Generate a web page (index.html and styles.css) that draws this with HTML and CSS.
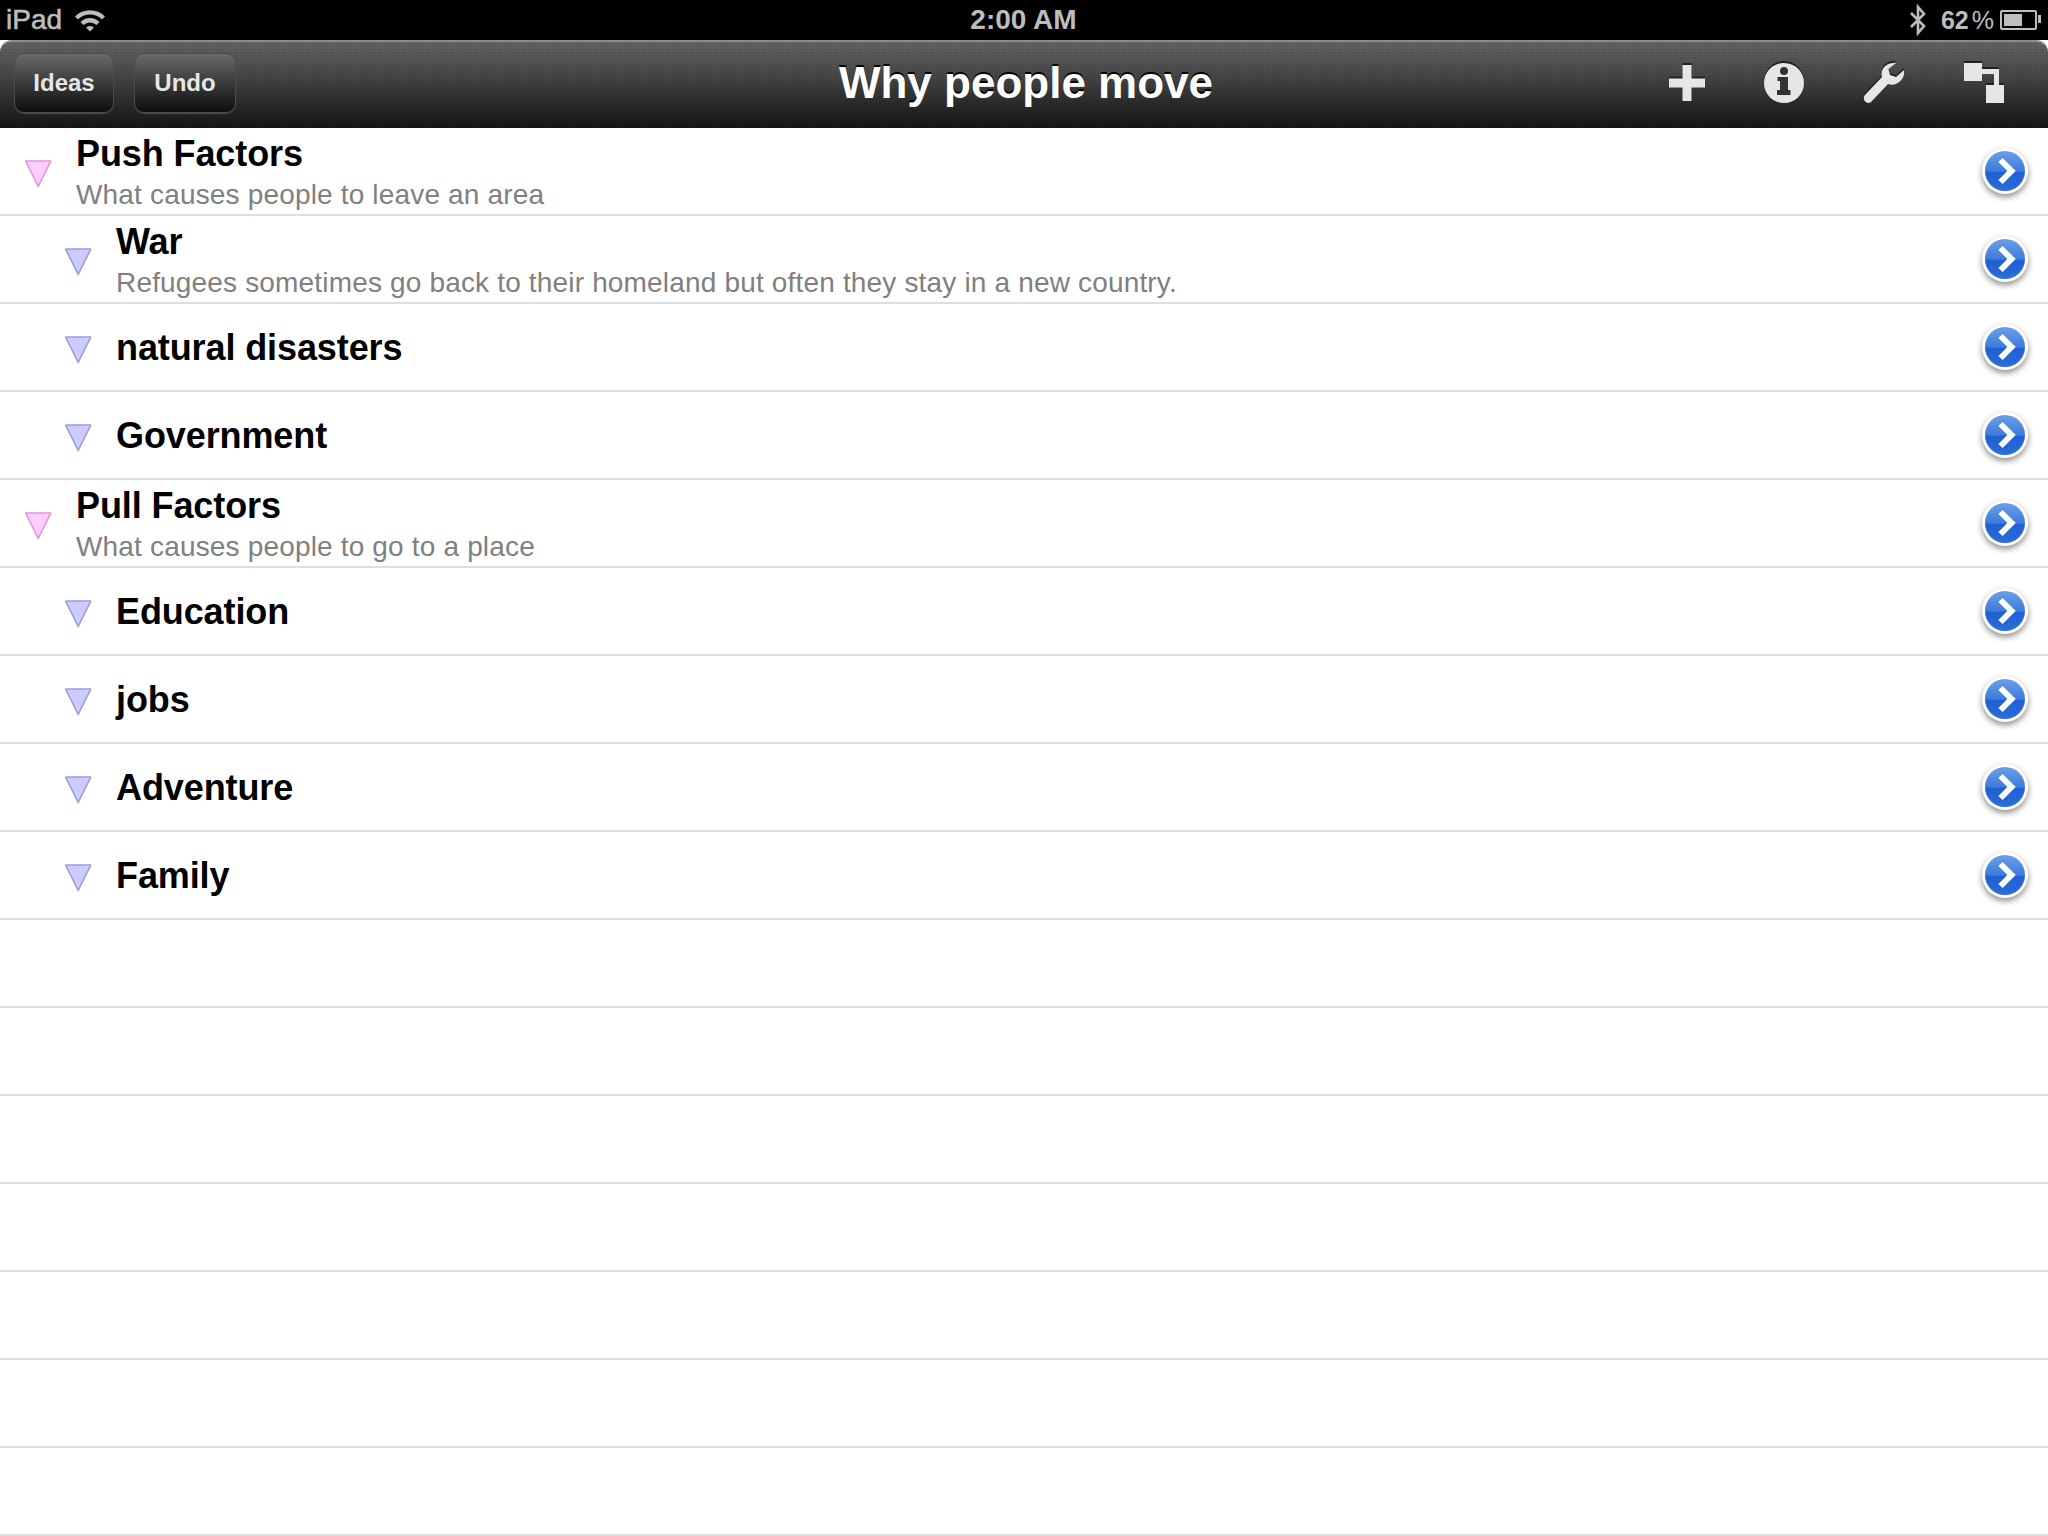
FILE: index.html
```html
<!DOCTYPE html>
<html lang="en">
<head>
    <meta charset="UTF-8">
    <title>Why people move</title>
    <link rel="stylesheet" href="styles.css">
</head>
<body>

    <svg class="svg-defs" width="0" height="0">
        <defs>
            <linearGradient id="disc-fill" x1="0" y1="0" x2="0" y2="1">
                <stop offset="0" stop-color="#6a9fe8"/>
                <stop offset="0.5" stop-color="#3f7cdd"/>
                <stop offset="0.54" stop-color="#1f5fd0"/>
                <stop offset="1" stop-color="#2c6edc"/>
            </linearGradient>
            <symbol id="disclosure" viewBox="0 0 50 50">
                <circle cx="25" cy="25" r="23" fill="#fff"/>
                <circle cx="25" cy="25" r="20" fill="url(#disc-fill)"/>
                <path d="M20.500 14 L31.500 25 L20.500 36" fill="none" stroke="#fff" stroke-width="6"/>
            </symbol>
            <symbol id="triangle" viewBox="0 0 28 28">
                <path d="M1.600 1 H26.800 L14.200 26.500 Z" stroke-width="1.600" stroke-linejoin="round"/>
            </symbol>
        </defs>
    </svg>

    <!-- status bar -->
    <div class="status-bar">
        <div class="status-left">
            <span class="carrier">iPad</span>
            <svg class="wifi" width="32" height="24" viewBox="0 0 32 24">
                <path d="M1 8.500 A21 21 0 0 1 31 8.500 L28 11.500 A17 17 0 0 0 4 11.500 Z" fill="#bdbdbd"/>
                <path d="M6.500 14 A13.500 13.500 0 0 1 25.500 14 L22.500 17 A9.500 9.500 0 0 0 9.500 17 Z" fill="#bdbdbd"/>
                <path d="M12 19.500 A6 6 0 0 1 20 19.500 L16 23.500 Z" fill="#bdbdbd"/>
            </svg>
        </div>
        <div class="status-time">2:00 AM</div>
        <div class="status-right">
            <svg class="bluetooth" width="18" height="32" viewBox="0 0 18 32">
                <path d="M2 9 L15 22 L9 29 V3 L15 10 L2 23" fill="none" stroke="#bdbdbd" stroke-width="2.600"/>
            </svg>
            <span class="battery-text">62<span class="pct">%</span></span>
            <div class="battery"><div class="battery-level"></div></div>
        </div>
    </div>

    <!-- toolbar -->
    <div class="toolbar">
        <div class="toolbar-left">
            <button class="bar-btn">Ideas</button>
            <button class="bar-btn">Undo</button>
        </div>
        <h1 class="toolbar-title">Why people move</h1>
        <div class="toolbar-right">
            <svg class="tool-icon" width="36" height="36" viewBox="0 0 36 36">
                <path d="M13.500 0 H22.500 V13.500 H36 V22.500 H22.500 V36 H13.500 V22.500 H0 V13.500 H13.500 Z"/>
            </svg>
            <svg class="tool-icon" width="40" height="40" viewBox="0 0 40 40">
                <circle cx="20" cy="20" r="20"/>
                <circle cx="20" cy="8" r="4" class="icon-cut"/>
                <path d="M13.500 14 H24 V27 H26.500 V32 H13 V27 H16 V18 H13.500 Z" class="icon-cut"/>
            </svg>
            <svg class="tool-icon" width="42" height="42" viewBox="0 0 42 42">
                <path d="M1.500 33.500 L19 15 C17 7 23 0 33 1 L25.500 7 L27 13 L33 15 L41 8 C42.500 18 33 25 25 22 L8 40 C4 43 -1 38 1.500 33.500 Z"/>
            </svg>
            <svg class="tool-icon" width="40" height="40" viewBox="0 0 40 40">
                <path d="M0 0 H18 V6 H35 V22 H40 V40 H22 V22 H30 V11 H18 V18 H0 Z"/>
            </svg>
        </div>
    </div>

    <!-- outline rows -->
    <div class="outline">
        <div class="row level-1">
            <svg class="tri"><use href="#triangle"/></svg>
            <div class="row-text"><div class="row-title">Push Factors</div><div class="row-note">What causes people to leave an area</div></div>
            <svg class="disc"><use href="#disclosure"/></svg>
        </div>
        <div class="row level-2">
            <svg class="tri"><use href="#triangle"/></svg>
            <div class="row-text"><div class="row-title">War</div><div class="row-note">Refugees sometimes go back to their homeland but often they stay in a new country.</div></div>
            <svg class="disc"><use href="#disclosure"/></svg>
        </div>
        <div class="row level-2">
            <svg class="tri"><use href="#triangle"/></svg>
            <div class="row-text"><div class="row-title">natural disasters</div></div>
            <svg class="disc"><use href="#disclosure"/></svg>
        </div>
        <div class="row level-2">
            <svg class="tri"><use href="#triangle"/></svg>
            <div class="row-text"><div class="row-title">Government</div></div>
            <svg class="disc"><use href="#disclosure"/></svg>
        </div>
        <div class="row level-1">
            <svg class="tri"><use href="#triangle"/></svg>
            <div class="row-text"><div class="row-title">Pull Factors</div><div class="row-note">What causes people to go to a place</div></div>
            <svg class="disc"><use href="#disclosure"/></svg>
        </div>
        <div class="row level-2">
            <svg class="tri"><use href="#triangle"/></svg>
            <div class="row-text"><div class="row-title">Education</div></div>
            <svg class="disc"><use href="#disclosure"/></svg>
        </div>
        <div class="row level-2">
            <svg class="tri"><use href="#triangle"/></svg>
            <div class="row-text"><div class="row-title">jobs</div></div>
            <svg class="disc"><use href="#disclosure"/></svg>
        </div>
        <div class="row level-2">
            <svg class="tri"><use href="#triangle"/></svg>
            <div class="row-text"><div class="row-title">Adventure</div></div>
            <svg class="disc"><use href="#disclosure"/></svg>
        </div>
        <div class="row level-2">
            <svg class="tri"><use href="#triangle"/></svg>
            <div class="row-text"><div class="row-title">Family</div></div>
            <svg class="disc"><use href="#disclosure"/></svg>
        </div>
        <div class="row"></div>
        <div class="row"></div>
        <div class="row"></div>
        <div class="row"></div>
        <div class="row"></div>
        <div class="row"></div>
        <div class="row"></div>
    </div>

</body>
</html>
```

FILE: styles.css
```css
html, body {
    margin: 0;
    height: 100%;
    overflow: hidden;
    background: #fff;
    font-family: "Liberation Sans", Arial, sans-serif;
}

.svg-defs {
    display: block;
    height: 0;
}

/* Status bar */
.status-bar {
    height: 40px;
    background: #000;
    color: #bdbdbd;
    font-size: 28px;
    display: grid;
    grid-template-columns: 1fr auto 1fr;
    align-items: center;
    padding: 0 6px;
}
.status-left {
    display: flex;
    align-items: center;
    gap: 12px;
}
.carrier {
    -webkit-text-stroke: 0.6px #bdbdbd;
}
.status-time {
    font-weight: bold;
    margin-right: 1px;
}
.status-right {
    display: flex;
    align-items: center;
    justify-content: flex-end;
}
.bluetooth {
    margin-right: 14px;
}
.battery-text {
    font-size: 25px;
    font-weight: bold;
    margin-right: 6px;
}
.pct {
    font-weight: normal;
    margin-left: 3px;
}
.battery {
    width: 37px;
    height: 20px;
    box-sizing: border-box;
    border: 2px solid #bdbdbd;
    border-radius: 2px;
    padding: 2px;
    margin-right: 5px;
    position: relative;
}
.battery::after {
    content: "";
    position: absolute;
    right: -6px;
    top: 3px;
    width: 3px;
    height: 8px;
    background: #bdbdbd;
}
.battery-level {
    width: 62%;
    height: 100%;
    background: #bdbdbd;
}

/* Toolbar */
.toolbar {
    height: 88px;
    box-sizing: border-box;
    background:
        repeating-linear-gradient(90deg, rgba(0, 0, 0, 0.05) 0 1px, transparent 1px 3px),
        repeating-linear-gradient(0deg, rgba(0, 0, 0, 0.05) 0 1px, transparent 1px 3px),
        linear-gradient(#646464, #4e4e4e 30%, #2c2c2c 70%, #161616);
    border-top: 2px solid #8c8c8c;
    border-radius: 12px 12px 0 0;
    display: grid;
    grid-template-columns: 1fr auto 1fr;
    align-items: center;
    padding: 0 14px 4px;
}
.toolbar-left {
    display: flex;
    gap: 20px;
}
.bar-btn {
    width: 100px;
    height: 60px;
    border: 1px solid #4a4a4a;
    border-radius: 10px;
    background: linear-gradient(#6a6a6a, #3a3a3a 50%, #0e0e0e);
    box-shadow: 0 1px 1px rgba(255, 255, 255, 0.2);
    color: #e6e6e6;
    font-family: inherit;
    font-size: 24px;
    font-weight: bold;
    padding: 0;
}
.toolbar-left .bar-btn:last-child {
    width: 102px;
}
.toolbar-title {
    margin: 0 0 0 4px;
    color: #fff;
    font-size: 44px;
    font-weight: bold;
    text-shadow: 0 -2px 0 #000;
}
.toolbar-right {
    display: flex;
    justify-content: flex-end;
    align-items: center;
    gap: 59px;
    padding-right: 30px;
}
.tool-icon {
    fill: #e6e6e6;
    filter: drop-shadow(0 -2px 0 #222);
}
.icon-cut {
    fill: #333;
}

/* Outline rows */
.row {
    height: 88px;
    box-sizing: border-box;
    border-bottom: 2px solid #dedede;
    display: flex;
    align-items: center;
    padding-right: 18px;
}
.tri {
    width: 28px;
    height: 28px;
    flex: none;
    margin-top: 6px;
    margin-right: 24px;
}
.level-1 .tri {
    fill: #ffccff;
    stroke: #d29cd2;
    margin-left: 24px;
}
.level-2 .tri {
    fill: #ccccff;
    stroke: #9c9cd2;
    margin-left: 64px;
}
.row-text {
    flex: 1;
    min-width: 0;
    padding-top: 2px;
}
.row-title {
    color: #000;
    font-size: 36px;
    font-weight: bold;
    line-height: 46px;
    letter-spacing: -0.1px;
}
.row-note {
    color: #808080;
    font-size: 28px;
    line-height: 36px;
    letter-spacing: 0.17px;
}
.disc {
    width: 50px;
    height: 50px;
    flex: none;
    filter: drop-shadow(0 3px 3px rgba(0, 0, 0, 0.45));
}
```
